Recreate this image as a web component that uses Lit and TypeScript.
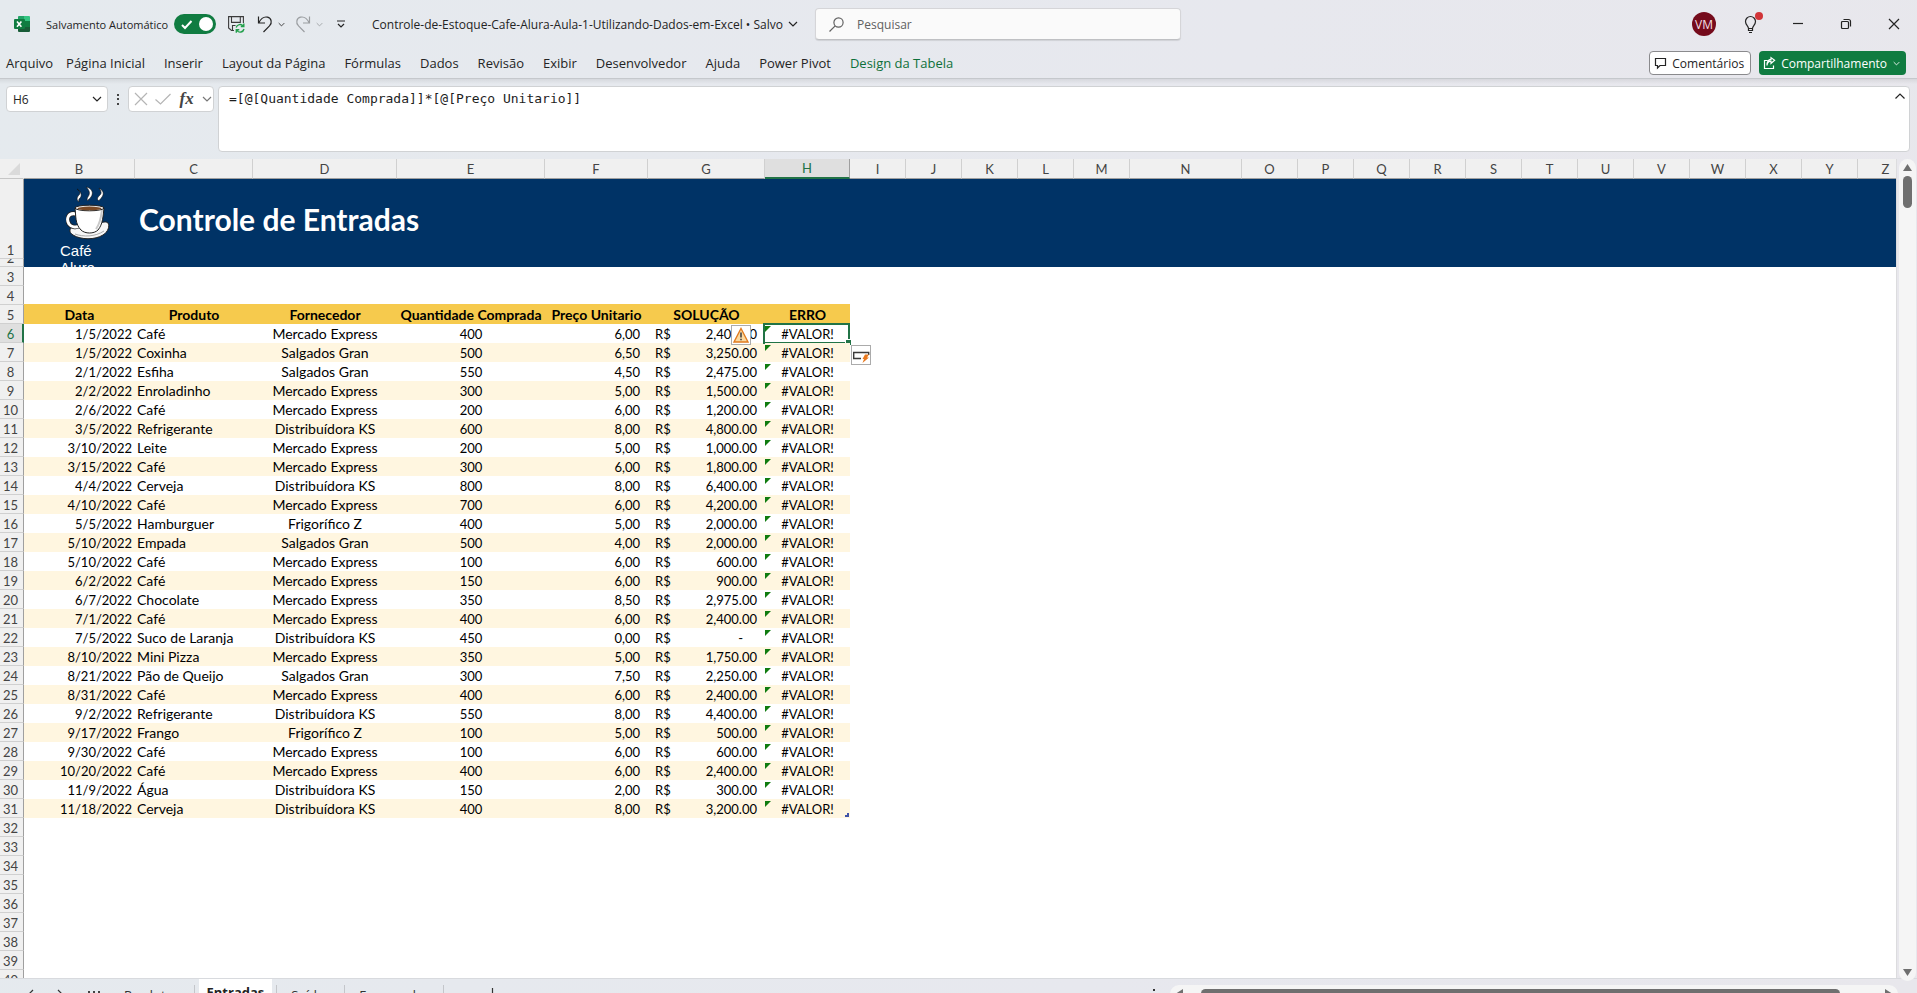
import { LitElement, html, css, svg, nothing } from "lit";
import { customElement, property } from "lit/decorators.js";
import { classMap } from "lit/directives/class-map.js";

type Entry = [string, string, string, string, string, string];

const COLUMNS: [string, number][] = [
  ["B", 111], ["C", 118], ["D", 144], ["E", 148], ["F", 103], ["G", 117], ["H", 85],
  ["I", 56], ["J", 56], ["K", 56], ["L", 56], ["M", 56], ["N", 112],
  ..."OPQRSTUVWXYZ".split("").map((l) => [l, 56] as [string, number]),
];
const SHEET_WIDTH = COLUMNS.reduce((sum, c) => sum + c[1], 24);

const ME = "Mercado Express";
const SG = "Salgados Gran";
const KS = "Distribuídora KS";
const FZ = "Frigorífico Z";

const ENTRIES: Entry[] = [
  ["1/5/2022", "Café", ME, "400", "6,00", "2,400.00"],
  ["1/5/2022", "Coxinha", SG, "500", "6,50", "3,250.00"],
  ["2/1/2022", "Esfiha", SG, "550", "4,50", "2,475.00"],
  ["2/2/2022", "Enroladinho", ME, "300", "5,00", "1,500.00"],
  ["2/6/2022", "Café", ME, "200", "6,00", "1,200.00"],
  ["3/5/2022", "Refrigerante", KS, "600", "8,00", "4,800.00"],
  ["3/10/2022", "Leite", ME, "200", "5,00", "1,000.00"],
  ["3/15/2022", "Café", ME, "300", "6,00", "1,800.00"],
  ["4/4/2022", "Cerveja", KS, "800", "8,00", "6,400.00"],
  ["4/10/2022", "Café", ME, "700", "6,00", "4,200.00"],
  ["5/5/2022", "Hamburguer", FZ, "400", "5,00", "2,000.00"],
  ["5/10/2022", "Empada", SG, "500", "4,00", "2,000.00"],
  ["5/10/2022", "Café", ME, "100", "6,00", "600.00"],
  ["6/2/2022", "Café", ME, "150", "6,00", "900.00"],
  ["6/7/2022", "Chocolate", ME, "350", "8,50", "2,975.00"],
  ["7/1/2022", "Café", ME, "400", "6,00", "2,400.00"],
  ["7/5/2022", "Suco de Laranja", KS, "450", "0,00", "-"],
  ["8/10/2022", "Mini Pizza", ME, "350", "5,00", "1,750.00"],
  ["8/21/2022", "Pão de Queijo", SG, "300", "7,50", "2,250.00"],
  ["8/31/2022", "Café", ME, "400", "6,00", "2,400.00"],
  ["9/2/2022", "Refrigerante", KS, "550", "8,00", "4,400.00"],
  ["9/17/2022", "Frango", FZ, "100", "5,00", "500.00"],
  ["9/30/2022", "Café", ME, "100", "6,00", "600.00"],
  ["10/20/2022", "Café", ME, "400", "6,00", "2,400.00"],
  ["11/9/2022", "Água", KS, "150", "2,00", "300.00"],
  ["11/18/2022", "Cerveja", KS, "400", "8,00", "3,200.00"],
];

const chevron = (size = 10) => html`<svg class="stroke" width=${size} height=${size} viewBox="0 0 10 10" aria-hidden="true">
  <path d="M1 3l4 4 4-4" />
</svg>`;

const uiBase = css`
  * { box-sizing: border-box; }
  button, input, textarea { font: inherit; color: inherit; margin: 0; }
  button { border: 0; background: none; padding: 0; display: inline-flex; align-items: center; justify-content: center; white-space: nowrap; }
  svg { display: block; flex: none; overflow: visible; }
  .stroke { fill: none; stroke: currentColor; stroke-width: 1.2; }
`;

@customElement("title-bar")
export class TitleBar extends LitElement {
  static styles = [uiBase, css`
    :host { display: grid; grid-template-columns: 372px 443px minmax(200px, 366px) 1fr; align-items: center; height: 48px; font-size: 12px; color: #242424; }
    .quick { display: flex; align-items: center; padding-left: 14px; }
    .autosave { display: flex; align-items: center; justify-content: space-between; width: 170px; margin-left: 16px; white-space: nowrap; font-size: 11px; }
    .switch { position: relative; width: 42px; height: 20px; flex: none; }
    .switch input { appearance: none; width: 42px; height: 20px; border-radius: 10px; background: #107c41; display: block; }
    .switch svg { position: absolute; inset: 0; pointer-events: none; }
    .save { margin-left: 12px; }
    .undo { margin-left: 12px; gap: 5px; }
    .redo { margin-left: 10px; gap: 5px; color: #9a9da0; }
    .more { margin-left: 14px; }
    .file { justify-content: flex-start; gap: 5px; }
    .search { display: flex; align-items: center; height: 32px; gap: 13px; padding: 0 13px; border: 1px solid #d5d5d8; border-bottom-color: #bfc0c3; border-radius: 4px; background: #fafafa; box-shadow: 0 1px 1px #0000001a; color: #616161; }
    .search input { border: 0; background: none; outline: 0; padding: 0; width: 100%; }
    .search input::placeholder { color: #616161; opacity: 1; }
    .window { display: flex; align-items: center; justify-content: flex-end; padding-right: 18px; }
    .avatar { width: 24px; height: 24px; border-radius: 12px; background: #750b1c; color: #f3dfe2; margin-right: 29px; }
    .tips { margin-right: 30px; }
    .min { margin-right: 38px; }
    .restore { margin-right: 38px; }
  `];

  render() {
    return html`
      <div class="quick">
        <svg width="16" height="16" viewBox="0 0 16 16" aria-hidden="true">
          <path fill="#21a366" d="M4 1a1 1 0 0 1 1-1h5v5H4z" />
          <path fill="#33c481" d="M10 0h5a1 1 0 0 1 1 1v4h-6z" />
          <path fill="#107c41" d="M10 5h6v6h-6z" />
          <path fill="#185c37" d="M4 5h6v6h6v4a1 1 0 0 1-1 1H5a1 1 0 0 1-1-1z" />
          <rect width="11" height="10" y="3" rx="1" fill="#107c41" />
          <path stroke="#fff" stroke-width="1.6" d="M3 5.4l4.4 5.4M7.4 5.4L3 10.8" />
        </svg>
        <label class="autosave">Salvamento Automático
          <span class="switch">
            <input type="checkbox" role="switch" checked />
            <svg width="42" height="20" viewBox="0 0 42 20" aria-hidden="true">
              <path d="M8 11l3 3 6.500-7" fill="none" stroke="#fff" stroke-width="2" />
              <circle cx="32" cy="10" r="7" fill="#fff" />
            </svg>
          </span>
        </label>
        <button class="save" aria-label="Salvar">
          <svg width="17" height="17" viewBox="0 0 17 17" fill="none" stroke="#3b3b3b" stroke-width="1.100">
            <path d="M6 14.500H3.500L.6 12V.6h14.800V7M3.500.6v5.800h8.800V.6M4.500 14.500v-5h3" />
            <path stroke="#22a04b" stroke-width="1.400" d="M8.200 11.500a4 4 0 0 1 7-1.500M15.800 7.500v3h-3M16 13a4 4 0 0 1-7 1.600M8.300 16.800v-3h3" />
          </svg>
        </button>
        <button class="undo" aria-label="Desfazer">
          <svg class="stroke" width="16" height="17" viewBox="0 0 16 17"><path d="M1.500 .5v6.500h6.500M1.800 6.700C4 2.500 7.500.5 10.500 1.200c4 1 5 5.800 2 8.700L6.500 16" /></svg>
          ${chevron(7)}
        </button>
        <button class="redo" aria-label="Refazer">
          <svg class="stroke" width="16" height="17" viewBox="0 0 16 17"><path d="M14.500 .5v6.500h-6.500M14.200 6.700C12 2.500 8.500.5 5.500 1.200c-4 1-5 5.800-2 8.700L9.500 16" /></svg>
          ${chevron(7)}
        </button>
        <button class="more" aria-label="Personalizar barra de acesso rápido">
          <svg class="stroke" width="8" height="8" viewBox="0 0 8 8"><path d="M0 1h8M1 4l3 3 3-3" /></svg>
        </button>
      </div>
      <div><button class="file">Controle-de-Estoque-Cafe-Alura-Aula-1-Utilizando-Dados-em-Excel • Salvo ${chevron()}</button></div>
      <label class="search">
        <svg class="stroke" width="15" height="15" viewBox="0 0 15 15" aria-hidden="true"><circle cx="9.500" cy="5.500" r="4.600" /><path d="M6.200 8.800L.5 14.500" /></svg>
        <input type="search" placeholder="Pesquisar" aria-label="Pesquisar" />
      </label>
      <div class="window">
        <button class="avatar">VM</button>
        <button class="tips" aria-label="Novidades">
          <svg class="stroke" width="18" height="20" viewBox="0 0 18 20">
            <path d="M3.500 14.500c0-2.500-3-3.500-3-7a5 5 0 0 1 10 0c0 3.500-3 4.500-3 7zM3.500 14.500v2h4v-2M4 18.500h3" />
            <circle cx="14" cy="2" r="4" fill="#d13438" stroke="none" />
          </svg>
        </button>
        <button class="min" aria-label="Minimizar"><svg class="stroke" width="10" height="10" viewBox="0 0 10 10"><path d="M0 4.500h10" /></svg></button>
        <button class="restore" aria-label="Restaurar"><svg class="stroke" width="10" height="10" viewBox="0 0 10 10"><rect x=".5" y="2.500" width="7" height="7" rx="1" /><path d="M2.500 .5h5a2 2 0 0 1 2 2v5" /></svg></button>
        <button aria-label="Fechar"><svg class="stroke" width="10" height="10" viewBox="0 0 10 10"><path d="M0 0l10 10M10 0L0 10" /></svg></button>
      </div>
    `;
  }
}

@customElement("ribbon-tabs")
export class RibbonTabs extends LitElement {
  static styles = [uiBase, css`
    :host { display: flex; align-items: center; justify-content: space-between; height: 30px; padding: 0 11px 0 6px; font-size: 13px; color: #242424; border-bottom: 1px solid #c5c8cc; box-sizing: content-box; height: 30px; }
    nav { display: flex; gap: 19px; }
    nav button:first-child { margin-right: -6px; }
    .design { color: #0e703a; }
    .actions { display: flex; gap: 8px; font-size: 12px; }
    .actions button { height: 24px; border-radius: 4px; gap: 6px; padding: 0 6px 0 5px; }
    .comments { background: #fff; border: 1px solid #8a8a8d; }
    .actions .share { background: #107c41; color: #fff; }
  `];

  render() {
    const tabs = ["Arquivo", "Página Inicial", "Inserir", "Layout da Página", "Fórmulas", "Dados", "Revisão", "Exibir", "Desenvolvedor", "Ajuda", "Power Pivot"];
    return html`
      <nav>
        ${tabs.map((t) => html`<button>${t}</button>`)}
        <button class="design">Design da Tabela</button>
      </nav>
      <div class="actions">
        <button class="comments">
          <svg class="stroke" width="11" height="11" viewBox="0 0 11 11"><path d="M.5.5h10v7H5l-2.500 2.500v-2.500h-2z" /></svg>Comentários
        </button>
        <button class="share">
          <svg class="stroke" width="11" height="12" viewBox="0 0 11 12"><path d="M3.500 3.500h-3v8h9v-3M3 8.500c.3-3 2-4.300 4-4.300V6.500l3.600-3.300L7 .6v1.800C4.500 2.500 3 4.500 3 8.500z" /></svg>Compartilhamento ${chevron(7)}
        </button>
      </div>
    `;
  }
}

@customElement("formula-bar")
export class FormulaBar extends LitElement {
  static styles = [uiBase, css`
    :host { display: flex; align-items: flex-start; padding: 7px 7px 7px 6px; color: #242424; font-size: 13px; background: linear-gradient(#00000012, transparent 5px); }
    .box { display: flex; align-items: center; height: 26px; background: #fff; border: 1px solid #d0d2d4; border-radius: 4px; }
    .name { width: 102px; padding: 0 5px 0 6px; }
    .name input { border: 0; outline: 0; padding: 0; background: none; width: 100%; font-size: 12px; }
    .grip { margin: 8px 8px 0; }
    .tools { width: 86px; margin-right: 4px; padding: 0 1px 0 6px; justify-content: space-between; color: #b5b5b5; }
    .tools .fx { color: #444; font: italic 700 17px "Liberation Serif", serif; }
    .tools .drop { color: #777; }
    .formula { flex: 1; height: 66px; align-items: flex-start; padding: 2px 3px 0 10px; }
    textarea { flex: 1; height: 56px; border: 0; outline: 0; resize: none; padding: 0; background: none; font: 13px/20px "DejaVu Sans Mono", monospace; color: #1d1d1d; }
    .collapse { margin-top: 1px; }
  `];

  render() {
    return html`
      <div class="box name"><input aria-label="Caixa de nome" value="H6" />${chevron()}</div>
      <svg class="grip" width="4" height="12" viewBox="0 0 4 12" fill="#444" aria-hidden="true"><path d="M1 0h2v2H1zM1 4h2v2H1zM1 9h2v2H1z" /></svg>
      <div class="box tools">
        <button aria-label="Cancelar"><svg class="stroke" width="12" height="12" viewBox="0 0 12 12"><path d="M0 0l12 12M12 0L0 12" /></svg></button>
        <button aria-label="Inserir"><svg class="stroke" width="16" height="12" viewBox="0 0 16 12"><path d="M.5 6.500L5.500 11 15.500 1" /></svg></button>
        <button class="fx" aria-label="Inserir função">fx</button>
        <button class="drop" aria-label="Mais">${chevron()}</button>
      </div>
      <div class="box formula">
        <textarea aria-label="Barra de fórmulas" spellcheck="false" .value=${"=[@[Quantidade Comprada]]*[@[Preço Unitario]]"}></textarea>
        <button class="collapse" aria-label="Recolher"><svg class="stroke" width="12" height="12" viewBox="0 0 12 12"><path d="M1.500 8.500L6 4l4.500 4.500" /></svg></button>
      </div>
    `;
  }
}

@customElement("coffee-logo")
export class CoffeeLogo extends LitElement {
  static styles = css`
    :host { display: block; color: #fff; font: 15px/17px "Liberation Sans", Arial, sans-serif; }
    svg { display: block; margin-left: 6px; }
  `;

  render() {
    return html`
      <svg width="44" height="57" viewBox="0 0 44 57" aria-hidden="true">
        ${svg`
          <g fill="#fff" stroke="#111" stroke-width=".6">
            <path d="M11 4c5 3 5 7 3 9s-1 3-1 4c-3-2-2-5 0-7s1-4-2-6z" />
            <path d="M20 2c6 1 8 6 5 10-1 2-3 2-3 4-2-2 0-4 1-6 1-3 0-5-3-8z" />
            <path d="M33 3c5 3 5 6 3 9s-3 3-3 4c-3-2-1-4 1-6s1-4-1-7z" />
          </g>
          <path d="M10 41c-7 1-8 6-3 9 8 5 22 5 30 0 5-3 7-9 5-12-2-2-6-1-9 1z" fill="#f7f7f7" stroke="#222" />
          <path d="M9 49c8 3 20 3 29-3" fill="none" stroke="#aaa" />
          <path d="M10 29c-8-2-10 5-7 10 2 3 7 4 10 2" fill="none" stroke="#222" stroke-width="4.500" />
          <path d="M10 29c-8-2-10 5-7 10 2 3 7 4 10 2" fill="none" stroke="#fff" stroke-width="3" />
          <path d="M9 23c1 8 0 16 6 22 4 4 13 4 17 0 5-6 5-14 6-22z" fill="#fff" stroke="#222" />
          <path d="M36 25c-1 8-2 14-6 19" fill="none" stroke="#c9c9c9" stroke-width="2" />
          <ellipse cx="23.500" cy="23" rx="14.500" ry="2.800" fill="#eee" stroke="#222" />
          <ellipse cx="23.500" cy="23.400" rx="12" ry="1.800" fill="#7a4a26" />
        `}
      </svg>
      Café<br />Alura
    `;
  }
}

@customElement("sheet-grid")
export class SheetGrid extends LitElement {
  @property() selected = "H";

  static styles = [uiBase, css`
    :host { display: flex; min-height: 0; flex: 1; }
    .view { flex: 1; min-width: 0; overflow: hidden; background: #fff; font: 13px/18px Lato, Carlito, sans-serif; color: #000; border-right: 1px solid #dcdcde; }
    table { table-layout: fixed; border-collapse: separate; border-spacing: 0; }
    th, td { padding: 1px 0 0; height: 19px; white-space: nowrap; overflow: visible; }
    thead th { height: 20px; line-height: 17px; background: #f0f0f0; border-right: 1px solid #d0d0d0; border-bottom: 1px solid #9f9f9f; font-weight: 400; color: #444; }
    thead .corner { border-right-color: #f0f0f0; border-bottom-color: #c6c6c6; }
    thead .corner svg { margin-left: 8px; }
    thead .on { background: #dfdfdf; color: #217346; border-bottom: 2px solid #217346; border-right-color: #9f9f9f; }
    .num { background: #f0f0f0; border-right: 1px solid #9f9f9f; border-bottom: 1px solid #d0d0d0; font-weight: 400; font-size: 13px; color: #444; line-height: 16px; padding: 2px 2px 0 0; vertical-align: bottom; }
    .num.on { background: #dfdfdf; color: #217346; border-right: 2px solid #217346; padding-right: 1px; }
    .num.thin { height: 8px; padding-top: 0; }
    .clip { height: 7px; overflow: hidden; display: flex; align-items: flex-end; justify-content: center; }
    .banner-cell { background: #003366; padding: 0; }
    .banner { height: 88px; overflow: hidden; display: flex; padding: 6px 0 0 36px; }
    .banner coffee-logo { width: 79px; }
    .banner h1 { margin: 17px 0 0; color: #fff; font-size: 30px; line-height: 34px; font-weight: 700; }
    .names th { background: #f6ca4d; font-weight: 700; font-size: 14px; text-align: center; box-shadow: 0 -1px #f6ca4d; }
    .names .num { background: #f0f0f0; font-weight: 400; font-size: 13px; box-shadow: none; }
    .band td { background: #fff6e0; }
    .band td:last-child { background: #fff; }
    .right { text-align: right; padding-right: 3px; }
    .left { padding-left: 2px; font-size: 14px; }
    .center { text-align: center; }
    .supplier { text-align: center; font-size: 14px; }
    .price { text-align: right; padding-right: 8px; }
    .money { display: flex; justify-content: space-between; padding: 0 8px 0 7px; }
    .money .zero { padding-right: 14px; }
    .error { position: relative; text-align: center; }
    .error::before { content: ""; position: absolute; left: 0; top: 2px; border-top: 6px solid #107c10; border-right: 6px solid transparent; }
    .cursor { position: absolute; inset: -1px 0 -1px -2px; border: 2px solid #217346; pointer-events: none; }
    .cursor::after { content: ""; position: absolute; right: -3px; bottom: -3px; width: 5px; height: 5px; background: #217346; outline: 1px solid #fff; }
    .tip { position: absolute; width: 20px; height: 20px; background: #fff; border: 1px solid #ababab; z-index: 1; }
    .alert { left: -34px; top: 1px; }
    .quick { left: 86px; top: 21px; }
    .end { position: absolute; right: 1px; bottom: 1px; }
    .scroll { flex: none; width: 17px; margin: 0 1px 0 2px; }
    .track { display: flex; flex-direction: column; align-items: center; height: calc(100% + 3px); background: #f5f5f5; border-radius: 9px; padding: 5px 0; position: relative; }
    .thumb { width: 9px; height: 32px; border-radius: 5px; background: #6f6f6f; margin: 5px 0 auto; }
    .track svg { fill: #6f6f6f; }
  `];

  private num(n: number) {
    return html`<th scope="row" class=${classMap({ num: true, on: n === 6 })}>${n}</th>`;
  }

  private blank(n: number) {
    return html`<tr>${this.num(n)}<td colspan="25"></td></tr>`;
  }

  private entry(e: Entry, i: number) {
    const [date, product, supplier, amount, price, total] = e;
    return html`<tr class=${i % 2 ? "band" : "plain"}>
      ${this.num(i + 6)}
      <td class="right">${date}</td>
      <td class="left">${product}</td>
      <td class="supplier">${supplier}</td>
      <td class="center">${amount}</td>
      <td class="price">${price}</td>
      <td><div class="money"><span>R$</span><span class=${total === "-" ? "zero" : "sum"}>${total}</span></div></td>
      <td class="error">#VALOR!${i === 0
        ? html`<div class="cursor"></div>
            <button class="tip alert" aria-label="Erro de valor"><svg width="16" height="16" viewBox="0 0 16 16"><path d="M8 1.500L15 15H1z" fill="#fbd9a0" stroke="#e07b1f" stroke-width="1.400" /><path d="M7.200 5.500h1.600v5H7.200zM7.200 11.700h1.600v1.600H7.200z" fill="#444" /></svg></button>
            <button class="tip quick" aria-label="Opções de preenchimento"><svg width="16" height="16" viewBox="0 0 16 16"><path d="M8 11.500H.7v-6h15V8" fill="none" stroke="#3b3b3b" stroke-width="1.400" /><path d="M12 7.500h4l-2 3h2L9.500 16l1.500-4H9.500z" fill="#e8781e" /></svg></button>`
        : nothing}${i === ENTRIES.length - 1
        ? html`<svg class="end" width="4" height="4" viewBox="0 0 4 4"><path d="M2 0h2v4H0V2h2z" fill="#4054a8" /></svg>`
        : nothing}</td>
      <td colspan="18"></td>
    </tr>`;
  }

  render() {
    return html`
      <div class="view">
        <table style="width:${SHEET_WIDTH}px">
          <colgroup><col style="width:24px" />${COLUMNS.map((c) => html`<col style="width:${c[1]}px" />`)}</colgroup>
          <thead><tr>
            <th class="corner"><svg width="12" height="12" viewBox="0 0 12 12"><path d="M12 0v12H0z" fill="#dadada" /></svg></th>
            ${COLUMNS.map(([l]) => html`<th scope="col" class=${classMap({ on: l === this.selected })}>${l}</th>`)}
          </tr></thead>
          <tbody>
            <tr>
              <th scope="row" class="num" style="height:80px">1</th>
              <td class="banner-cell" colspan="25" rowspan="2"><div class="banner"><coffee-logo></coffee-logo><h1>Controle de Entradas</h1></div></td>
            </tr>
            <tr><th scope="row" class="num thin"><div class="clip">2</div></th></tr>
            ${this.blank(3)}${this.blank(4)}
            <tr class="names">${this.num(5)}
              ${["Data", "Produto", "Fornecedor", "Quantidade Comprada", "Preço Unitario", "SOLUÇÃO", "ERRO"].map((n) => html`<th scope="col">${n}</th>`)}
              <td colspan="18"></td>
            </tr>
            ${ENTRIES.map((e, i) => this.entry(e, i))}
            ${[32, 33, 34, 35, 36, 37, 38, 39, 40].map((n) => this.blank(n))}
          </tbody>
        </table>
      </div>
      <div class="scroll"><div class="track">
        <svg width="9" height="7" viewBox="0 0 9 7"><path d="M4.500 0L9 7H0z" /></svg>
        <div class="thumb"></div>
        <svg width="9" height="7" viewBox="0 0 9 7"><path d="M4.500 7L9 0H0z" /></svg>
      </div></div>
    `;
  }
}

@customElement("sheet-tabs")
export class SheetTabs extends LitElement {
  static styles = [uiBase, css`
    :host { box-sizing: border-box; display: flex; align-items: flex-start; justify-content: space-between; height: 15px; flex: none; overflow: hidden; font-size: 13px; color: #333; border-top: 1px solid #d8dade; }
    .tabs { display: flex; align-items: flex-start; }
    .tabs button { height: 32px; }
    .arrows { display: flex; align-items: center; height: 32px; width: 110px; padding-left: 26px; gap: 23px; }
    .tab { padding: 0 14px; border-right: 1px solid #c4c6ca; margin-top: 6px; line-height: 20px; align-items: flex-start; }
    .tab.active { background: #fff; color: #222; font-weight: 700; padding: 4px 8px; margin: -1px 4px 0; border: 0; border-radius: 0 0 4px 4px; }
    .active + .tab { border-left: 1px solid #c4c6ca; }
    .tab.add { border: 0; margin-left: 28px; }
    .bar { display: flex; align-items: flex-start; width: 745px; gap: 15px; margin: 6px 19px 0 0; }
    .dots { margin-top: 4px; }
    .track { flex: 1; display: flex; height: 18px; padding: 4px 6px; border-radius: 9px; background: #f5f5f5; }
    .thumb { width: 639px; height: 9px; border-radius: 5px; background: #6f6f6f; margin: 0 auto 0 18px; }
    .track svg { fill: #6f6f6f; }
  `];

  render() {
    return html`
      <div class="tabs">
        <div class="arrows">
          <button aria-label="Anterior"><svg class="stroke" width="8" height="12" viewBox="0 0 8 12"><path d="M7 1L2 6l5 5" /></svg></button>
          <button aria-label="Próxima"><svg class="stroke" width="8" height="12" viewBox="0 0 8 12"><path d="M1 1l5 5-5 5" /></svg></button>
          <svg width="12" height="8" viewBox="0 0 12 8" fill="#444"><path d="M0 0h2v2H0zM5 0h2v2H5zM10 0h2v2h-2z" /></svg>
        </div>
        <button class="tab">Produtos</button>
        <button class="tab active">Entradas</button>
        <button class="tab">Saídas</button>
        <button class="tab">Fornecedor</button>
        <button class="tab add" aria-label="Nova planilha"><svg class="stroke" width="13" height="13" viewBox="0 0 13 13"><path d="M6.500 3v10M0 9.500h13" /></svg></button>
      </div>
      <div class="bar">
        <svg class="dots" width="2" height="14" viewBox="0 0 2 14" fill="#333"><path d="M0 0h2v2H0zM0 5h2v2H0zM0 10h2v2H0z" /></svg>
        <div class="track">
          <svg width="7" height="9" viewBox="0 0 7 9"><path d="M7 0v9L0 4.500z" /></svg>
          <div class="thumb"></div>
          <svg width="7" height="9" viewBox="0 0 7 9"><path d="M0 0v9l7-4.500z" /></svg>
        </div>
      </div>
    `;
  }
}

@customElement("app-root")
export class AppRoot extends LitElement {
  static styles = css`
    :host { display: flex; flex-direction: column; height: 100vh; overflow: hidden; background: linear-gradient(100deg, #e5eaee, #e7e8ee 60%, #e8e7ec); font-family: "Open Sans", "Segoe UI", sans-serif; }
  `;

  render() {
    return html`
      <title-bar></title-bar>
      <ribbon-tabs></ribbon-tabs>
      <formula-bar></formula-bar>
      <sheet-grid></sheet-grid>
      <sheet-tabs></sheet-tabs>
    `;
  }
}
